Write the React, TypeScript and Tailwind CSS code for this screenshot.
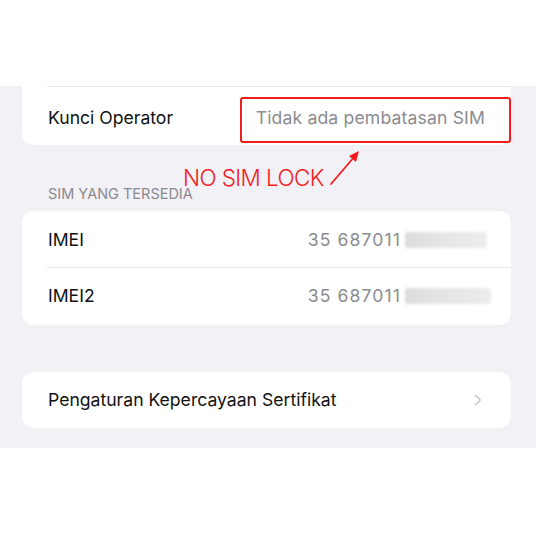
import { ChevronRight } from "lucide-react";

const font = { fontFamily: "Inter, 'Liberation Sans', sans-serif" };

function Blur({ w }: { w: number }) {
  return (
    <span
      className="ml-[4px] inline-block h-[16px] rounded-[2px] bg-gradient-to-r from-[#dcdcdc] via-[#e6e6e6] to-[#ececec] blur-[1.5px]"
      style={{ width: w }}
    />
  );
}

export default function App() {
  return (
    <div className="relative flex h-[536px] w-[536px] flex-col bg-white" style={font}>
      <div className="h-[86px] shrink-0 bg-white" />

      <div className="flex h-[362px] shrink-0 flex-col bg-[#f2f1f6] pl-[22px] pr-[25px]">
        {/* Operator lock card */}
        <div className="rounded-b-[12px] bg-white">
          <div className="ml-[25px] h-px bg-[#e6e6ea]" />
          <div className="flex h-[58px] items-center justify-between pl-[26px] pr-[26px] pt-[4px] text-[17.6px]">
            <span className="text-[#111]">Kunci Operator</span>
            <span className="tracking-[0.15px] text-[#8b8b90]">Tidak ada pembatasan SIM</span>
          </div>
        </div>

        <div className="mt-[38px] pl-[26px] text-[14.5px] uppercase text-[#8a8a8e]">
          SIM yang tersedia
        </div>

        {/* IMEI card */}
        <div className="mt-[6px] rounded-[12px] bg-white">
          <div className="flex h-[56px] items-center justify-between pl-[26px] pr-[24px] pt-[2px] text-[17.6px]">
            <span className="text-[#111]">IMEI</span>
            <span className="flex items-center tracking-[1.1px] text-[#8b8b90]">
              35 687011
              <Blur w={82} />
            </span>
          </div>
          <div className="ml-[25px] h-px bg-[#e6e6ea]" />
          <div className="flex h-[57px] items-center justify-between pl-[26px] pr-[20px] text-[17.6px]">
            <span className="text-[#111]">IMEI2</span>
            <span className="flex items-center tracking-[1.1px] text-[#8b8b90]">
              35 687011
              <Blur w={86} />
            </span>
          </div>
        </div>

        {/* Certificate card */}
        <div className="mt-[47px] flex h-[56px] items-center justify-between rounded-[12px] bg-white pl-[26px] pr-[24px] text-[17.6px]">
          <span className="text-[#111]">Pengaturan Kepercayaan Sertifikat</span>
          <ChevronRight className="h-[18px] w-[18px] text-[#c4c4c8]" strokeWidth={2} />
        </div>
      </div>

      <div className="flex-1 bg-white" />

      {/* annotation overlay */}
      <div className="absolute left-[240px] top-[97px] h-[46px] w-[271px] rounded-[3px] border-2 border-[#f31c1c]" />
      <div className="absolute left-[183px] top-[163px] text-[22.5px] font-light leading-[30px] tracking-[-0.6px] text-[#f31c1c]">
        NO SIM LOCK
      </div>
      <svg className="absolute left-[326px] top-[148px]" width="40" height="40" viewBox="0 0 40 40">
        <line x1="5" y1="36" x2="29" y2="8" stroke="#f31c1c" strokeWidth="1.8" strokeLinecap="round" />
        <polygon points="33,3 30,14 23,8" fill="#f31c1c" />
      </svg>
    </div>
  );
}
